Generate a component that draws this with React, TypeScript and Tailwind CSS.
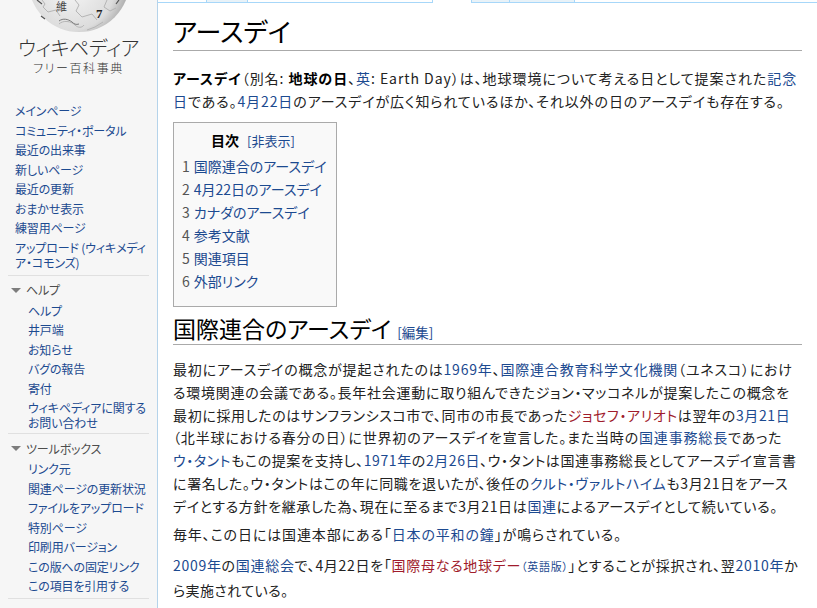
const navMain = [
  "メインページ",
  "コミュニティ・ポータル",
  "最近の出来事",
  "新しいページ",
  "最近の更新",
  "おまかせ表示",
  "練習用ページ",
];
const navHelp = ["ヘルプ", "井戸端", "お知らせ", "バグの報告", "寄付"];
const navTools = [
  "リンク元",
  "関連ページの更新状況",
  "ファイルをアップロード",
  "特別ページ",
  "印刷用バージョン",
  "この版への固定リンク",
  "この項目を引用する",
];
const toc = [
  ["1", "国際連合のアースデイ"],
  ["2", "4月22日のアースデイ"],
  ["3", "カナダのアースデイ"],
  ["4", "参考文献"],
  ["5", "関連項目"],
  ["6", "外部リンク"],
];

function A({ children, red }: { children: React.ReactNode; red?: boolean }) {
  return <a className={red ? "text-[#a01c2c]" : "text-[#1c4a90]"}>{children}</a>;
}

function Globe() {
  return (
    <svg width="100" height="33" viewBox="0 0 100 33" className="mx-auto block">
      <defs>
        <radialGradient id="g" cx="0.42" cy="0.55" r="0.62">
          <stop offset="0" stopColor="#f7f7f7" />
          <stop offset="0.7" stopColor="#dcdcdc" />
          <stop offset="1" stopColor="#9a9a9a" />
        </radialGradient>
      </defs>
      <circle cx="50" cy="-18.5" r="50.5" fill="url(#g)" />
      <path d="M13 0l3 4-2 3 5 5 8-2 4 6M46 0l4 5-3 6 6 6 10-3 5 6M78 0l-3 7 6 4 6-3M30 24c4-4 12-3 16 1 3 3 7 3 9 0M58 30l8-3 8-5" fill="none" stroke="#b5b5b5" strokeWidth="1" />
      <path d="M30 21c4-3 9-2 13 1 2 2 4 3 7 2" fill="none" stroke="#6e6e6e" strokeWidth="0.9" />
      <path d="M8 0l5 4M12 16l4 3M90 0l-3 4" stroke="#555" strokeWidth="1.2" />
      <text x="27" y="11" fontSize="11" fill="#444" fontFamily="'Noto Sans CJK TC', serif">維</text>
      <text x="67" y="18" fontSize="13" fontWeight="700" fill="#222" fontFamily="'Liberation Serif', serif">7</text>
    </svg>
  );
}

function Portal({ title, items }: { title: string; items: string[] }) {
  return (
    <div className="mt-[3px]">
      <div className="mx-[8px] h-px bg-[#e0e0e0]" />
      <div className="mt-[5px] flex h-[19px] items-center pl-[11px] text-[12px] tracking-[-0.15px] text-[#4d4d4d]">
        <span className="mr-[5px] h-0 w-0 border-x-[5px] border-t-[5px] border-x-transparent border-t-[#7d7d7d]" />
        {title}
      </div>
      <div className="mt-[3px] pl-[28px]">
        {items.map((t) => (
          <div key={t} className="mb-[4.5px] whitespace-nowrap text-[12px] leading-[15px] tracking-[-0.15px] text-[#1c4a90]">
            {t}
          </div>
        ))}
      </div>
    </div>
  );
}

export default function App() {
  return (
    <div
      className="flex h-[608px] w-[817px] overflow-hidden bg-white text-[#222] [font-feature-settings:'palt']"
      style={{ fontFamily: '"Noto Sans CJK JP", "Liberation Sans", sans-serif' }}
    >
      <aside className="w-[158px] shrink-0 border-r border-[#b5d3ea] bg-[#f6f6f6]">
        <Globe />
        <div className="mt-[3px] text-center text-[20px] leading-[24px] font-light tracking-[-0.4px] text-[#333]">
          ウィキペディア
        </div>
        <div className="text-center text-[12px] leading-[16px] font-light tracking-[1.6px] text-[#333]">
          フリー百科事典
        </div>
        <div className="mt-[27px] pl-[15px]">
          {navMain.map((t) => (
            <div key={t} className="mb-[4.5px] whitespace-nowrap text-[12px] leading-[15px] tracking-[-0.15px] text-[#1c4a90]">
              {t}
            </div>
          ))}
          <div className="whitespace-nowrap text-[12px] leading-[15px] tracking-[-0.15px] text-[#1c4a90]">
            アップロード (ウィキメディ
            <br />
            ア・コモンズ)
          </div>
        </div>
        <div className="h-[2px]" />
        <Portal title="ヘルプ" items={navHelp} />
        <div className="whitespace-nowrap pl-[28px] text-[12px] leading-[15px] tracking-[-0.15px] text-[#1c4a90]">
          ウィキペディアに関する
          <br />
          お問い合わせ
        </div>
        <Portal title="ツールボックス" items={navTools} />
        <div className="mx-[8px] mt-[2px] h-px bg-[#e0e0e0]" />
      </aside>

      <main className="min-w-0 flex-1">
        <div className="flex h-[3px]">
          <div className="w-[48px] border-b border-[#a7d7f9]" />
          <div className="w-[42px] border-x border-b border-[#a7d7f9] bg-[#e8f2f8]" />
          <div className="w-[185px] border-r border-b border-[#a7d7f9]" />
          <div className="w-[38px]" />
          <div className="w-[39px] border-x border-b border-[#a7d7f9] bg-[#e8f2f8]" />
          <div className="w-[65px] border-r border-b border-[#a7d7f9] bg-[#e8f2f8]" />
          <div className="flex-1 border-b border-[#a7d7f9]" />
        </div>

        <div className="pl-[15px] pr-[15px]">
          <h1 className="mt-[11px] border-b border-[#aaa] pb-[3px] text-[26px] leading-[33px] text-[#000]">
            アースデイ
          </h1>
          <div className="mt-[16px] whitespace-nowrap text-[14px] leading-[23px]">
            <div className="tracking-[0.95px]">
              <b className="text-black">アースデイ</b>（別名: <b className="text-black">地球の日</b>、<A>英</A>: Earth Day）は、地球環境について考える日として提案された<A>記念</A>
            </div>
            <div className="tracking-[0.9px]">
              <A>日</A>である。<A>4月22日</A>のアースデイが広く知られているほか、それ以外の日のアースデイも存在する。
            </div>
          </div>

          <div className="mt-[9px] h-[185px] w-[164px] border border-[#aaa] bg-[#f9f9f9] pl-[8px] pr-[12px] pt-[6px] text-[14px] leading-[23px]">
            <div className="mb-[3px] text-center">
              <b className="text-black">目次</b>
              <span className="ml-[8px] text-[13px] text-[#1c4a90]">[非表示]</span>
            </div>
            {toc.map(([n, t]) => (
              <div key={n} className="whitespace-nowrap text-[#1c4a90]">
                <span className="mr-[4px] text-[#555]">{n}</span>
                {t}
              </div>
            ))}
          </div>

          <h2 className="mt-[6px] flex items-baseline border-b border-[#aaa] text-[23px] leading-[31px] text-[#000]">
            国際連合のアースデイ
            <span className="ml-[6px] text-[13.5px] leading-none text-[#1c4a90]">[編集]</span>
          </h2>

          <div className="mt-[13px] whitespace-nowrap text-[14px] leading-[22.8px]">
            <div className="tracking-[0.8px]">
              最初にアースデイの概念が提起されたのは<A>1969年</A>、<A>国際連合教育科学文化機関</A>（ユネスコ）におけ
            </div>
            <div className="tracking-[0.72px]">
              る環境関連の会議である。長年社会運動に取り組んできたジョン・マッコネルが提案したこの概念を
            </div>
            <div className="tracking-[0.64px]">
              最初に採用したのはサンフランシスコ市で、同市の市長であった<A red>ジョセフ・アリオト</A>は翌年の<A>3月21日</A>
            </div>
            <div className="tracking-[0.83px]">
              （北半球における春分の日）に世界初のアースデイを宣言した。また当時の<A>国連事務総長</A>であった
            </div>
            <div className="tracking-[0.6px]">
              <A>ウ・タント</A>もこの提案を支持し、<A>1971年</A>の<A>2月26日</A>、ウ・タントは国連事務総長としてアースデイ宣言書
            </div>
            <div className="tracking-[0.65px]">
              に署名した。ウ・タントはこの年に同職を退いたが、後任の<A>クルト・ヴァルトハイム</A>も3月21日をアース
            </div>
            <div className="tracking-[0.65px]">
              デイとする方針を継承した為、現在に至るまで3月21日は<A>国連</A>によるアースデイとして続いている。
            </div>
            <p className="mt-[5px] tracking-[0.87px]">
              毎年、この日には国連本部にある「<A>日本の平和の鐘</A>」が鳴らされている。
            </p>
            <div className="mt-[9px] tracking-[0.7px]">
              <A>2009年</A>の<A>国連総会</A>で、4月22日を「<A red>国際母なる地球デー</A>
              <span className="text-[11px] text-[#1c4a90]">（英語版）</span>」とすることが採択され、翌<A>2010年</A>か
            </div>
            <div className="mt-[1px] tracking-[0.4px]">ら実施されている。</div>
          </div>
        </div>
      </main>
    </div>
  );
}
